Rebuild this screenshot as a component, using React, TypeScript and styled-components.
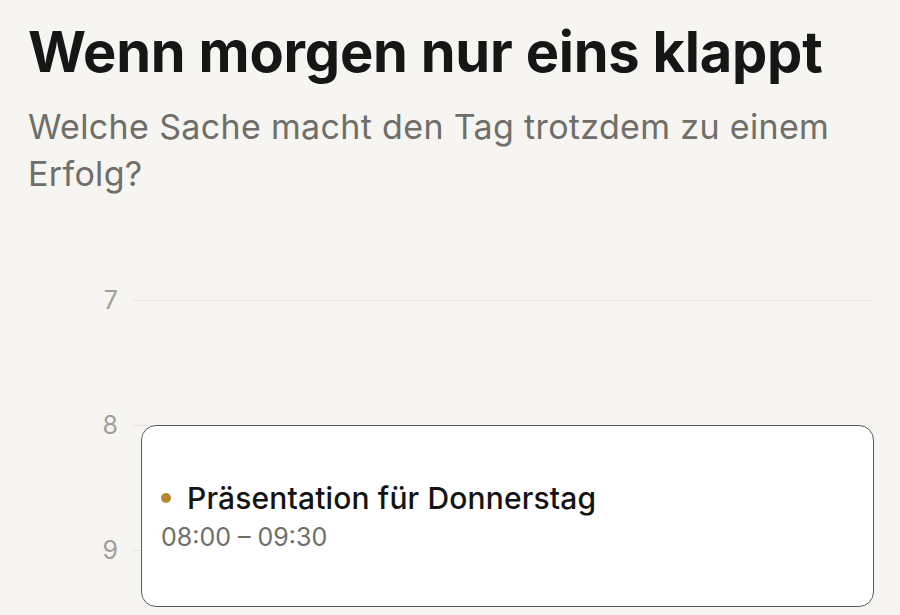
import React from "react";
import styled, { createGlobalStyle } from "styled-components";

const GlobalStyle = createGlobalStyle`
  html, body {
    margin: 0;
    padding: 0;
    background: #f6f5f1;
  }
  body {
    font-family: Inter, "Noto Sans", "Liberation Sans", sans-serif;
    overflow: hidden;
  }
`;

const Page = styled.div`
  width: 900px;
  height: 615px;
  box-sizing: border-box;
  padding: 20px 26px 0 28px;
  background: #f6f5f1;
  overflow: hidden;
`;

const Title = styled.h1`
  margin: 0;
  font-size: 56px;
  line-height: 64px;
  font-weight: 700;
  letter-spacing: -0.004em;
  color: #161616;
  white-space: nowrap;
`;

const Subtitle = styled.p`
  margin: 19px 0 0;
  font-size: 34px;
  line-height: 47px;
  font-weight: 400;
  color: #6f6e69;
  letter-spacing: 0.01em;
`;

const HOUR = 125;
const ROW = 26;

const Timeline = styled.div`
  position: relative;
  margin-top: 90px;
`;

const HourRow = styled.div`
  display: flex;
  align-items: center;
  gap: 14px;
  height: ${ROW}px;
  margin-bottom: ${HOUR - ROW}px;
`;

const HourLabel = styled.span`
  width: 90px;
  text-align: right;
  font-size: 25px;
  line-height: ${ROW}px;
  color: #a09f9a;
  font-weight: 400;
`;

const HourLine = styled.div`
  flex: 1;
  height: 1px;
  background: #e9e7e2;
`;

const EventCard = styled.div`
  position: absolute;
  left: 113px;
  right: 0;
  box-sizing: border-box;
  background: #ffffff;
  border: 1.5px solid #5a5a58;
  border-radius: 15px;
  display: flex;
  flex-direction: column;
  justify-content: center;
  padding: 2px 19px 0;
  gap: 5px;
`;

const EventTitleRow = styled.div`
  display: flex;
  align-items: center;
  gap: 16px;
`;

const Dot = styled.span`
  width: 10px;
  height: 10px;
  border-radius: 50%;
  background: #b8862e;
  flex-shrink: 0;
`;

const EventTitle = styled.span`
  font-size: 30px;
  line-height: 36px;
  font-weight: 500;
  color: #141414;
  letter-spacing: 0.005em;
`;

const EventTime = styled.span`
  font-size: 25px;
  line-height: 32px;
  color: #6f6e69;
`;

const hours = [7, 8, 9];
const event = {
  title: "Präsentation für Donnerstag",
  start: 8,
  end: 9.5,
  label: "08:00 – 09:30",
};

export default function App() {
  const top = (event.start - hours[0]) * HOUR + ROW / 2;
  const height = (event.end - event.start) * HOUR - 6;
  return (
    <>
      <GlobalStyle />
      <Page>
        <Title>Wenn morgen nur eins klappt</Title>
        <Subtitle>
          Welche Sache macht den Tag trotzdem zu einem Erfolg?
        </Subtitle>
        <Timeline>
          {hours.map((h) => (
            <HourRow key={h}>
              <HourLabel>{h}</HourLabel>
              <HourLine />
            </HourRow>
          ))}
          <EventCard style={{ top, height }}>
            <EventTitleRow>
              <Dot />
              <EventTitle>{event.title}</EventTitle>
            </EventTitleRow>
            <EventTime>{event.label}</EventTime>
          </EventCard>
        </Timeline>
      </Page>
    </>
  );
}
